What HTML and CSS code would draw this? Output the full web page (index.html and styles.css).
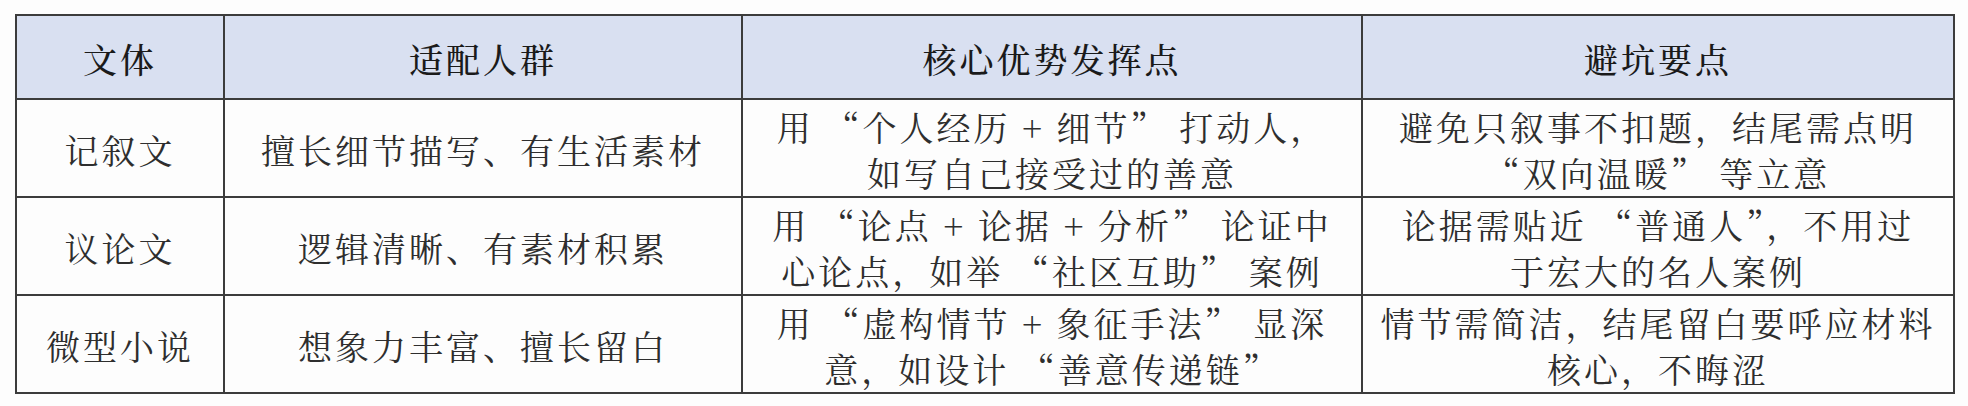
FILE: index.html
```html
<!DOCTYPE html>
<html lang="zh-CN">
<head>
<meta charset="utf-8">
<title>文体对比</title>
<link rel="stylesheet" href="styles.css">
</head>
<body>
<table class="grid">
  <colgroup>
    <col class="c1">
    <col class="c2">
    <col class="c3">
    <col class="c4">
  </colgroup>
  <thead>
    <tr class="head">
      <th>文体</th>
      <th>适配人群</th>
      <th>核心优势发挥点</th>
      <th>避坑要点</th>
    </tr>
  </thead>
  <tbody>
    <tr class="row">
      <td>记叙文</td>
      <td>擅长细节描写、有生活素材</td>
      <td><span class="ln">用 <span class="q">“</span>个人经历 + 细节<span class="q">”</span> 打动人，</span><span class="ln">如写自己接受过的善意</span></td>
      <td><span class="ln">避免只叙事不扣题，结尾需点明</span><span class="ln"><span class="q">“</span>双向温暖<span class="q">”</span> 等立意</span></td>
    </tr>
    <tr class="row">
      <td>议论文</td>
      <td>逻辑清晰、有素材积累</td>
      <td><span class="ln">用 <span class="q">“</span>论点 + 论据 + 分析<span class="q">”</span> 论证中</span><span class="ln">心论点，如举 <span class="q">“</span>社区互助<span class="q">”</span> 案例</span></td>
      <td><span class="ln">论据需贴近 <span class="q">“</span>普通人<span class="q">”</span>，不用过</span><span class="ln">于宏大的名人案例</span></td>
    </tr>
    <tr class="row">
      <td>微型小说</td>
      <td>想象力丰富、擅长留白</td>
      <td><span class="ln">用 <span class="q">“</span>虚构情节 + 象征手法<span class="q">”</span> 显深</span><span class="ln">意，如设计 <span class="q">“</span>善意传递链<span class="q">”</span></span></td>
      <td><span class="ln">情节需简洁，结尾留白要呼应材料</span><span class="ln">核心，不晦涩</span></td>
    </tr>
  </tbody>
</table>
</body>
</html>
```
FILE: styles.css
```css
html, body {
  margin: 0;
  padding: 0;
  background: #fdfdfd;
}
body {
  padding: 14px 0 0 15px;
  font-family: "Noto Serif CJK SC", "Noto Sans CJK SC", serif;
  color: #2e2e2e;
}
.grid {
  border-collapse: collapse;
  table-layout: fixed;
  width: 1938px;
}
.c1 { width: 208px; }
.c2 { width: 518px; }
.c3 { width: 620px; }
.c4 { width: 592px; }
.grid th, .grid td {
  border: 2px solid #3c3c3c;
  text-align: center;
  vertical-align: middle;
  padding: 0;
  font-size: 34px;
  letter-spacing: 3px;
  line-height: 46px;
  white-space: nowrap;
}
.grid td {
  padding-top: 4px;
}
.grid th {
  font-weight: 500;
  background: #d9e0f1;
  color: #1a1a1a;
  padding-top: 4px;
}
.head { height: 84px; }
.row { height: 97px; }
.ln { display: block; }
.q { font-feature-settings: "fwid" 1; }
```
